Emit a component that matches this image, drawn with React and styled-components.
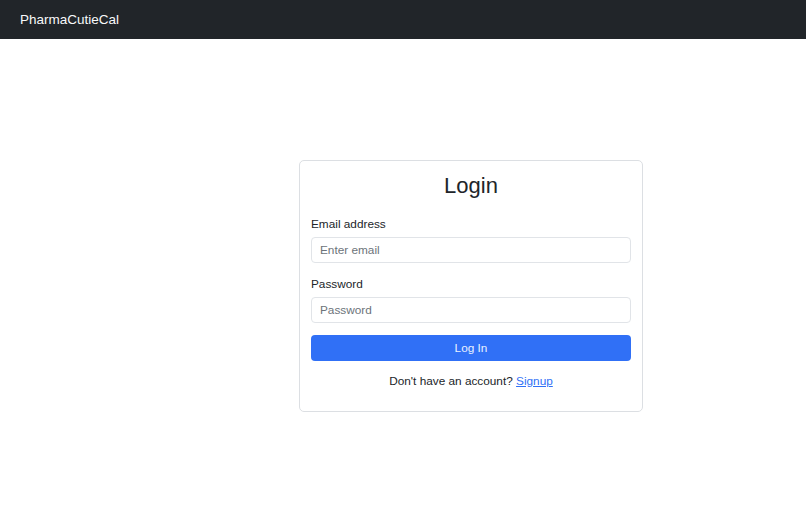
import React from 'react';
import styled, { createGlobalStyle } from 'styled-components';

const GlobalStyle = createGlobalStyle`
  * { box-sizing: border-box; }
  body {
    margin: 0;
    background: #ffffff;
    color: #212529;
    font-family: "Liberation Sans", Arial, sans-serif;
  }
`;

const Navbar = styled.nav`
  height: 39px;
  background-color: #212529;
  display: flex;
  align-items: center;
  padding: 0 20px;
`;

const Brand = styled.a`
  color: #f8f9fa;
  font-size: 13.5px;
  text-decoration: none;
`;

const Main = styled.main`
  display: flex;
  padding-top: 121px;
  padding-left: 299px;
`;

const Card = styled.div`
  width: 344px;
  border: 1px solid #dcdfe3;
  border-radius: 5px;
  padding: 12px 11px 23px;
`;

const Title = styled.h2`
  margin: 0 0 18px;
  text-align: center;
  font-size: 22px;
  font-weight: 400;
  line-height: 26px;
  color: #212529;
`;

const Field = styled.div`
  margin-bottom: ${p => p.$gap ?? 14}px;
`;

const Label = styled.label`
  display: block;
  font-size: 11.8px;
  line-height: 14px;
  margin-bottom: 6px;
  color: #212529;
`;

const Input = styled.input`
  display: block;
  width: 100%;
  height: 26px;
  padding: 0 8px;
  border: 1px solid #e1e4e8;
  border-radius: 4px;
  font-family: inherit;
  font-size: 11.8px;
  color: #212529;
  outline: none;

  &::placeholder {
    color: #6c737a;
  }
`;

const Button = styled.button`
  display: block;
  width: 100%;
  height: 26px;
  margin-top: 12px;
  border: none;
  border-radius: 4px;
  background-color: #3070f6;
  color: #e9f0ff;
  font-family: inherit;
  font-size: 11.8px;
`;

const Footer = styled.p`
  margin: 13px 0 0;
  text-align: center;
  font-size: 11.8px;
  line-height: 14px;
  color: #212529;

  a {
    color: #3070f6;
  }
`;

export default function App() {
  return (
    <>
      <GlobalStyle />
      <Navbar>
        <Brand href="#">PharmaCutieCal</Brand>
      </Navbar>
      <Main>
        <Card>
          <Title>Login</Title>
          <Field>
            <Label>Email address</Label>
            <Input type="email" placeholder="Enter email" />
          </Field>
          <Field $gap={0}>
            <Label>Password</Label>
            <Input type="password" placeholder="Password" />
          </Field>
          <Button type="button">Log In</Button>
          <Footer>
            Don't have an account? <a href="#">Signup</a>
          </Footer>
        </Card>
      </Main>
    </>
  );
}
